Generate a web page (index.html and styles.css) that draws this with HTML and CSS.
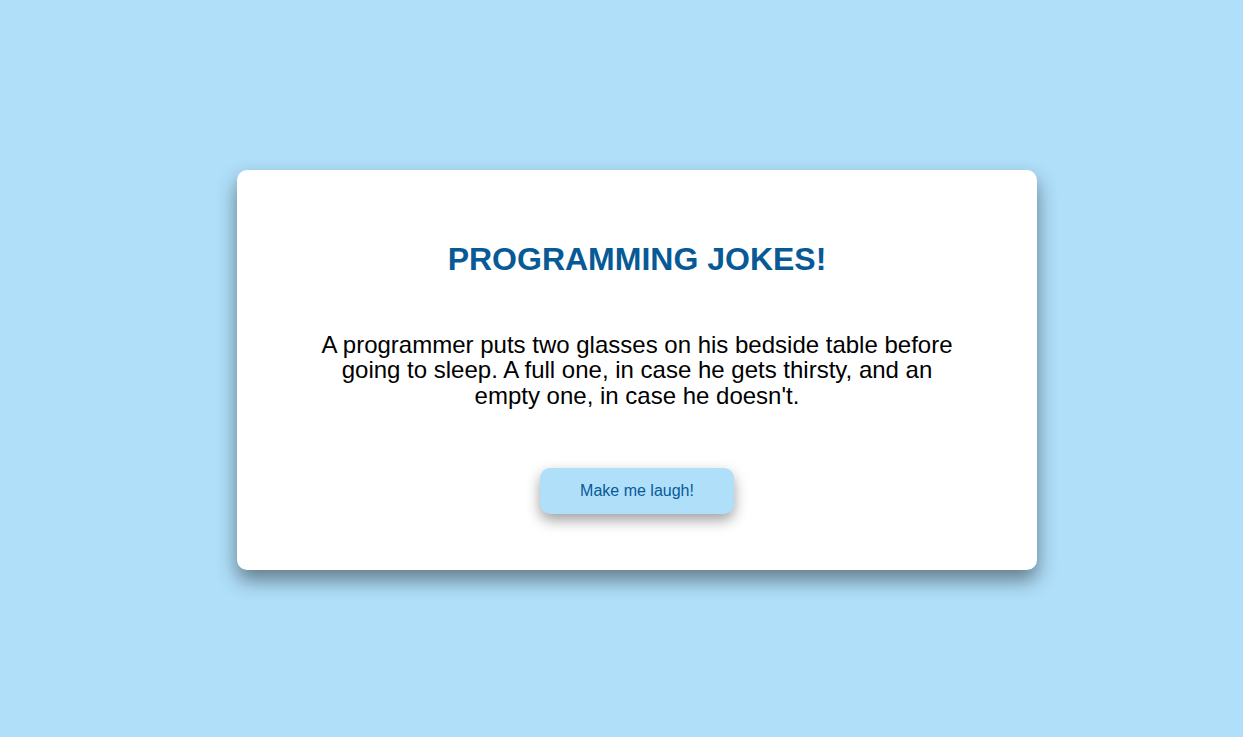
FILE: index.html
```html
<!DOCTYPE html>
<html lang="en">
<head>
<meta charset="utf-8">
<title>Programming Jokes</title>
<link rel="stylesheet" href="styles.css">
</head>
<body>
<main class="page">
  <section class="card">
    <h1 class="title">PROGRAMMING JOKES!</h1>
    <p class="joke">A programmer puts two glasses on his bedside table before going to sleep. A full one, in case he gets thirsty, and an empty one, in case he doesn't.</p>
    <button class="btn" type="button">Make me laugh!</button>
  </section>
</main>
</body>
</html>
```

FILE: styles.css
```css
* { box-sizing: border-box; }
html, body { margin: 0; padding: 0; }
body {
  background: #b0dffa;
  font-family: "Liberation Sans", Arial, Helvetica, sans-serif;
}
.page {
  min-height: 100vh;
  display: flex;
  align-items: center;
  justify-content: center;
  padding: 3px 0 0 31px;
}
.card {
  width: 800px;
  height: 400px;
  background: #fff;
  border-radius: 10px;
  box-shadow: 0 10px 20px rgba(0, 0, 0, 0.45);
  padding: 71px 80px 0;
  display: flex;
  flex-direction: column;
  align-items: center;
  text-align: center;
}
.title {
  margin: 0;
  font-size: 32px;
  font-weight: 700;
  color: #075a96;
  line-height: 1.15;
}
.joke {
  margin: 54px 0 59px;
  font-size: 24px;
  line-height: 25.6px;
  color: #000;
}
.btn {
  background: #b0dffa;
  color: #075a96;
  border: none;
  border-radius: 10px;
  padding: 14px 40px;
  font-family: inherit;
  font-size: 16px;
  line-height: 18px;
  width: 194px;
  box-shadow: 0 6px 14px rgba(0, 0, 0, 0.38);
  cursor: pointer;
}
```
